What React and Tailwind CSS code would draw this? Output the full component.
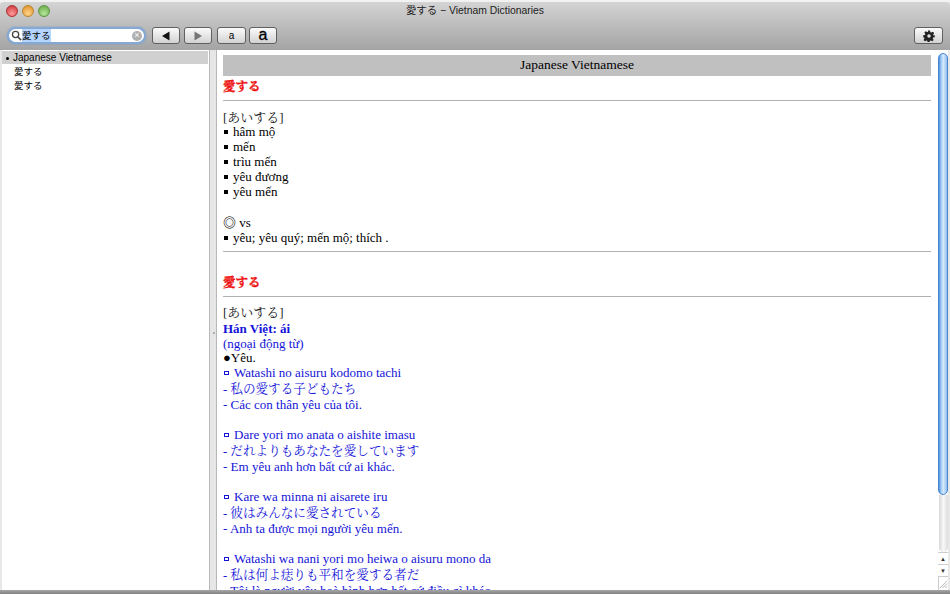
const serif = "font-['Liberation_Serif','Noto_Serif_CJK_JP','Noto_Sans_CJK_JP',serif]";

const Tri = ({ dir, color }) => (
  <svg width="10" height="10" viewBox="0 0 10 10">
    <path d={dir === "left" ? "M8.5 0.5V9.5L1 5Z" : "M1.5 0.5V9.5L9 5Z"} fill={color} />
  </svg>
);

const ToolButton = ({ className, children }) => (
  <div className={`flex h-[17px] items-center justify-center rounded-[3px] border border-[#606060] bg-gradient-to-b from-[#fbfbfb] to-[#d2d2d2] ${className}`}>
    {children}
  </div>
);

const Gear = () => (
  <svg width="12" height="12" viewBox="0 0 24 24">
    <path
      fill="#222"
      fillRule="evenodd"
      d="M10 1h4l.7 3.4 1.9.8 2.9-1.9 2.8 2.8-1.9 2.9.8 1.9L23.6 10.6v3.8l-3.4.7-.8 1.9 1.9 2.9-2.8 2.8-2.9-1.9-1.9.8-.7 3.4h-3.6l-.7-3.4-1.9-.8-2.9 1.9-2.8-2.8 1.9-2.9-.8-1.9L.4 14.4v-3.8l3.4-.7.8-1.9-1.9-2.9 2.8-2.8 2.9 1.9 1.9-.8ZM12 8.5a3.5 3.5 0 1 0 0 7 3.5 3.5 0 0 0 0-7Z"
    />
  </svg>
);

const Line = ({ h, className = "", children }) => (
  <div className={`whitespace-nowrap ${className}`} style={{ height: h, lineHeight: `${h}px` }}>
    {children}
  </div>
);

const Rule = ({ className }) => <div className={`h-px bg-[#b0b0b0] ${className}`} />;

const Square = () => <span className="mr-[5px] ml-[1px] inline-block size-[4px] translate-y-[-2px] bg-black" />;

const Hollow = () => <span className="mr-[5px] ml-[1px] inline-block h-[4px] w-[5px] translate-y-[-2px] border border-[#1414d8]" />;

const meanings = ["hâm mộ", "mến", "trìu mến", "yêu đương", "yêu mến"];

const examples = [
  ["Dare yori mo anata o aishite imasu", "だれよりもあなたを愛しています", "Em yêu anh hơn bất cứ ai khác."],
  ["Kare wa minna ni aisarete iru", "彼はみんなに愛されている", "Anh ta được mọi người yêu mến."],
  ["Watashi wa nani yori mo heiwa o aisuru mono da", "私は何よ痣りも平和を愛する者だ", "Tôi là người yêu hoà bình hơn bất cứ điều gì khác."],
];

export default function App() {
  return (
    <div className="flex h-[594px] w-[950px] flex-col overflow-hidden bg-[#e8e8e8] font-['Liberation_Sans','Noto_Sans_CJK_JP',sans-serif] text-black">
      <div className="h-[2px] shrink-0 bg-[#f2f2f2]" />
      <div className="h-[48px] shrink-0 rounded-t-[4px] bg-gradient-to-b from-[#d4d4d4] to-[#a4a4a4]">
        <div className="relative flex h-[17px] items-center pl-[6px] pt-[1px]">
          <div className="flex gap-[4px]">
            <span className="size-[12px] rounded-full border border-[#a33] bg-[radial-gradient(circle_at_50%_75%,#ff9a9a,#c92f36)]" />
            <span className="size-[12px] rounded-full border border-[#b8862e] bg-[radial-gradient(circle_at_50%_75%,#ffd58c,#dd8a1e)]" />
            <span className="size-[12px] rounded-full border border-[#5c9440] bg-[radial-gradient(circle_at_50%_75%,#b6e59a,#5fa540)]" />
          </div>
          <div className="absolute inset-x-0 text-center text-[10.4px] text-[#222]">愛する − Vietnam Dictionaries</div>
        </div>
        <div className="mt-[8px] flex h-[17px] items-center pl-[7px] pr-[7px]">
          <div className="flex h-[17px] w-[139px] items-center rounded-full border-2 border-[#86a9d3] bg-white pl-[2px] pr-[2px] shadow-[0_0_2px_#6f9bd1]">
            <svg width="11" height="11" viewBox="0 0 12 12" className="shrink-0">
              <circle cx="5" cy="5" r="3.4" fill="none" stroke="#444" strokeWidth="1.4" />
              <path d="M7.6 7.6 11 11" stroke="#444" strokeWidth="1.8" />
            </svg>
            <span className="bg-[#b5d5ff] text-[9.5px] leading-[13px]">愛する</span>
            <span className="ml-auto flex size-[10px] items-center justify-center rounded-full bg-[#b0b0b0] text-[9px] leading-none text-white">×</span>
          </div>
          <div className="ml-[6px] flex gap-[4px]">
            <ToolButton className="w-[28px]"><Tri dir="left" color="#111" /></ToolButton>
            <ToolButton className="w-[28px]"><Tri dir="right" color="#777" /></ToolButton>
          </div>
          <div className="ml-[5px] flex gap-[3px]">
            <ToolButton className="w-[29px] text-[10px] font-medium">a</ToolButton>
            <ToolButton className="w-[28px] pb-[2px] text-[16px] leading-none [-webkit-text-stroke:0.3px_#000]">a</ToolButton>
          </div>
          <ToolButton className="ml-auto w-[29px]"><Gear /></ToolButton>
        </div>
      </div>

      <div className="flex min-h-0 flex-1 pl-[2px] pr-[2px]">
        <div className="w-[207px] shrink-0 bg-white pt-[1px] text-[10px]">
          <div className="mr-[1px] flex h-[13px] items-center bg-[#d0d0d0] pl-[4px] pt-[1px] leading-none">
            <span className="mr-[4px] size-[3px] rounded-full bg-black" />
            Japanese Vietnamese
          </div>
          <div className="mt-[1px] pl-[12px] text-[9.5px] leading-[14px]">愛する</div>
          <div className="pl-[12px] text-[9.5px] leading-[14px]">愛する</div>
        </div>
        <div className="flex w-[8px] shrink-0 items-center justify-end border-x border-[#b8b8b8] bg-[#e6e6e6] pt-[25px] pr-[1px]">
          <span className="size-[2px] rounded-full bg-[#999]" />
        </div>
        <div className={`min-w-0 flex-1 overflow-hidden bg-white pl-[6px] pr-[7px] pt-[5px] text-[13px] ${serif}`}>
          <div className="flex h-[21px] items-center justify-center bg-[#c0c0c0] text-[13.5px]">Japanese Vietnamese</div>
          <Line h={22} className="text-[12.5px] font-bold text-[#ee1111] [-webkit-text-stroke:0.4px_#ee1111]">愛する</Line>
          <Rule className="mt-[2px]" />
          <Line h={15} className="mt-[8px] translate-y-[1px] text-[13px] text-[#222]">[あいする]</Line>
          {meanings.map((m) => (
            <Line key={m} h={15}><Square />{m}</Line>
          ))}
          <Line h={17} className="mt-[15px]">◎ vs</Line>
          <Line h={14}><Square />yêu; yêu quý; mến mộ; thích .</Line>
          <Rule className="mt-[6px]" />
          <Line h={22} className="mt-[20px] text-[12.5px] font-bold text-[#ee1111] [-webkit-text-stroke:0.4px_#ee1111]">愛する</Line>
          <Rule className="mt-[2px]" />
          <Line h={16} className="mt-[8px] text-[13px] text-[#222]">[あいする]</Line>
          <Line h={15} className="font-bold text-[#1414d8]">Hán Việt: ái</Line>
          <Line h={15} className="text-[#1414d8]">(ngoại động từ)</Line>
          <Line h={14}>●Yêu.</Line>
          <div className="text-[#1414d8]">
            <Line h={16}><Hollow />Watashi no aisuru kodomo tachi</Line>
            <Line h={16} className="text-[12.6px]">- 私の愛する子どもたち</Line>
            <Line h={15}>- Các con thân yêu của tôi.</Line>
            {examples.map(([romaji, jp, vi]) => (
              <div key={romaji} className="mt-[15px]">
                <Line h={16}><Hollow />{romaji}</Line>
                <Line h={16} className="text-[12.6px]">- {jp}</Line>
                <Line h={15}>- {vi}</Line>
              </div>
            ))}
          </div>
        </div>
        <div className="flex w-[10px] shrink-0 flex-col bg-white">
          <div className="mx-auto mt-[3px] h-[442px] w-[10px] shrink-0 rounded-full border border-[#4a86d0] bg-[linear-gradient(90deg,#4d8fdc,#a9cff5_30%,#d8eafc_55%,#8fbdf0)]" />
          <div className="mx-auto h-[57px] w-[9px] shrink-0 rounded-b-full bg-gradient-to-r from-[#d8d8d8] via-[#f8f8f8] to-[#dddddd]" />
          <div className="flex h-[12px] shrink-0 items-center justify-center border-t border-[#ccc] text-[6px] leading-none text-[#333]">▲</div>
          <div className="flex h-[12px] shrink-0 items-center justify-center border-t border-[#ccc] text-[6px] leading-none text-[#333]">▼</div>
          <div className="flex-1 border-t border-l border-[#ccc]">
            <svg viewBox="0 0 10 12" className="h-full w-full">
              <path d="M1 11 9 3M4 11l5-5M7 11l2-2" stroke="#999" strokeWidth="0.8" fill="none" />
            </svg>
          </div>
        </div>
      </div>
      <div className="h-[4px] shrink-0 bg-gradient-to-b from-[#a8a8a8] to-[#808080]" />
    </div>
  );
}
